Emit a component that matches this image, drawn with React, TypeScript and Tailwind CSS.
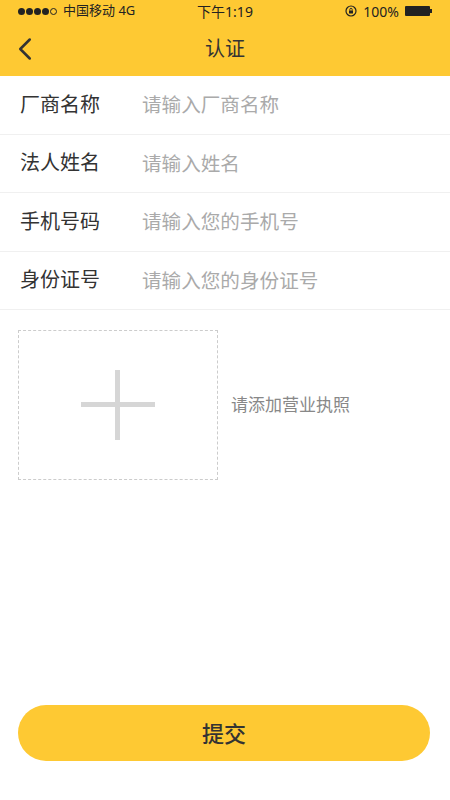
import { ChevronLeft } from 'lucide-react'

const fields = [
  { label: '厂商名称', placeholder: '请输入厂商名称' },
  { label: '法人姓名', placeholder: '请输入姓名' },
  { label: '手机号码', placeholder: '请输入您的手机号' },
  { label: '身份证号', placeholder: '请输入您的身份证号' },
]

const font = { fontFamily: '"Noto Sans", "Noto Sans CJK SC", sans-serif' }

export default function App() {
  return (
    <div className="w-[450px] h-[800px] bg-white flex flex-col text-[#333]" style={font}>
      {/* header */}
      <div className="bg-[#fec933]">
        <div className="h-[22px] flex items-center px-[18px] text-[13px] text-[#222] relative">
          <div className="flex items-center gap-[1px]">
            {[0, 1, 2, 3].map((i) => (
              <span key={i} className="w-[7px] h-[7px] rounded-full bg-[#222]" />
            ))}
            <span className="w-[7px] h-[7px] rounded-full border border-[#222]" />
          </div>
          <span className="ml-[6px]">中国移动 4G</span>
          <span className="absolute left-1/2 -translate-x-1/2 text-[14px]">下午1:19</span>
          <div className="ml-auto flex items-center gap-[6px]">
            <svg width="12" height="12" viewBox="0 0 12 12">
              <circle cx="6" cy="6" r="5" fill="none" stroke="#222" strokeWidth="1.2" />
              <rect x="4" y="5.5" width="4" height="3" fill="#222" />
              <path d="M4.8 5.5V4.5a1.2 1.2 0 0 1 2.4 0v1" fill="none" stroke="#222" strokeWidth="0.9" />
            </svg>
            <span className="text-[14px]">100%</span>
            <div className="flex items-center">
              <div className="w-[25px] h-[10px] bg-[#222] rounded-[1px]" />
              <div className="w-[2px] h-[4px] bg-[#222]" />
            </div>
          </div>
        </div>
        <div className="h-[54px] flex items-center relative">
          <ChevronLeft size={38} strokeWidth={1.6} className="ml-[6px] text-[#333]" />
          <span className="absolute left-1/2 -translate-x-1/2 text-[20px] text-[#333]">认证</span>
        </div>
      </div>

      {/* form */}
      <div className="flex flex-col">
        {fields.map((f) => (
          <div key={f.label} className="h-[58.5px] flex items-center border-b border-[#f0f0f0] px-[20px]">
            <span className="w-[122px] text-[20px] text-[#333]">{f.label}</span>
            <span className="text-[19.6px] text-[#aaa]">{f.placeholder}</span>
          </div>
        ))}
      </div>

      {/* upload */}
      <div className="flex items-center mt-[20px] px-[18px]">
        <div className="w-[200px] h-[150px] border border-dashed border-[#ccc] flex items-center justify-center">
          <svg width="74" height="70" viewBox="0 0 74 70">
            <rect x="0" y="32" width="74" height="5" fill="#d6d6d6" />
            <rect x="34" y="0" width="5" height="70" fill="#d6d6d6" />
          </svg>
        </div>
        <span className="ml-[13px] text-[17px] text-[#888]">请添加营业执照</span>
      </div>

      {/* submit */}
      <div className="mt-auto pl-[18px] pr-[20px] pb-[39px]">
        <button className="w-full h-[56px] rounded-full bg-[#fec933] text-[22px] font-medium text-[#333]" style={font}>
          提交
        </button>
      </div>
    </div>
  )
}
